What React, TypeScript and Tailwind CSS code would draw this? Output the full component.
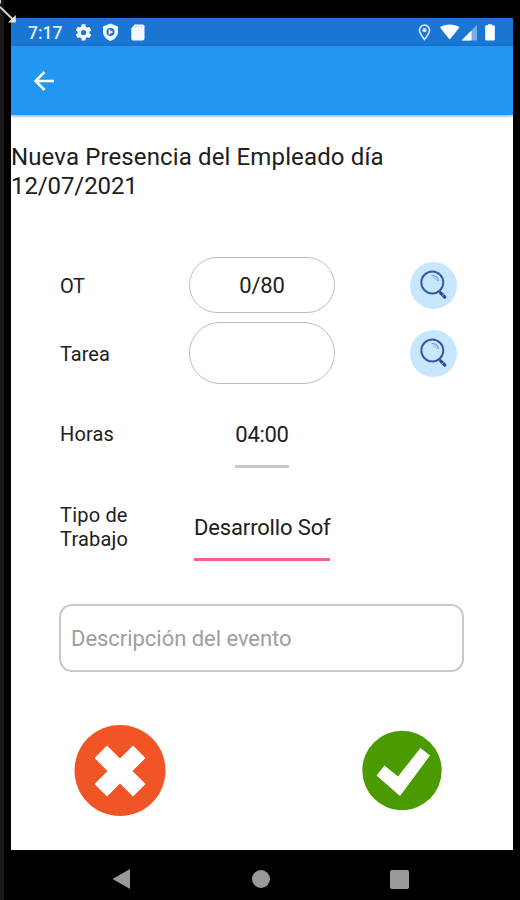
import React from "react";

function StatusIcons() {
  return (
    <svg className="ml-[12px] h-7 w-[72px] shrink-0" viewBox="0 0 72 28" fill="#f4f8ff">
      <g transform="translate(-1.3 4.700) scale(0.82)">
        <path d="M19.14 12.94c.04-.3.06-.61.06-.94s-.02-.64-.07-.94l2.03-1.58a.49.49 0 0 0 .12-.61l-1.92-3.32a.49.49 0 0 0-.59-.22l-2.39.96a7 7 0 0 0-1.62-.94l-.36-2.54A.48.48 0 0 0 13.92 2h-3.84a.47.47 0 0 0-.47.41l-.36 2.54c-.59.24-1.13.57-1.62.94l-2.39-.96a.47.47 0 0 0-.59.22L2.74 8.87a.48.48 0 0 0 .12.61l2.03 1.58a6 6 0 0 0 0 1.88l-2.03 1.58a.49.49 0 0 0-.12.61l1.92 3.32c.12.22.37.29.59.22l2.39-.96c.5.38 1.03.7 1.62.94l.36 2.54c.05.24.24.41.48.41h3.84c.24 0 .44-.17.47-.41l.36-2.54c.59-.24 1.13-.56 1.62-.94l2.39.96c.22.08.47 0 .59-.22l1.92-3.32a.47.47 0 0 0-.12-.61zM12 15.2a3.2 3.2 0 1 1 0-6.4 3.2 3.2 0 0 1 0 6.4z" />
      </g>
      <path
        fillRule="evenodd"
        d="M35.500 5.500l7.500 3v5.300c0 4.200-3 7.700-7.500 9.200-4.500-1.500-7.500-5-7.500-9.200V8.500zM35.500 10a4 4 0 1 0 0 8 4 4 0 0 0 0-8z"
      />
      <path d="M33.600 11.200l4.600 2.800-4.600 2.800z" />
      <path d="M59.500 6.500h8.300a1.700 1.700 0 0 1 1.700 1.700v12.600a1.700 1.700 0 0 1-1.700 1.700H58a1.700 1.700 0 0 1-1.700-1.700V10.500z" />
      <path d="M61 8v1.500M63.700 8v1.500M66.400 8v1.500" stroke="#a9cbf1" strokeWidth="1" />
    </svg>
  );
}

function SignalIcons() {
  return (
    <svg className="mr-[18px] h-7 w-[80px] shrink-0" viewBox="0 0 80 28" fill="white">
      <path
        d="M9.500 7.200a5 5 0 0 1 5 5c0 3-5 9.300-5 9.300s-5-6.300-5-9.300a5 5 0 0 1 5-5z"
        fill="none"
        stroke="#d5e5fa"
        strokeWidth="1.700"
      />
      <circle cx="9.500" cy="12.200" r="2.100" fill="#d5e5fa" />
      <path d="M25 9C30.500 5.500 39 5.500 44.500 9Q44 10.500 34.700 21.500Q25.500 10.500 25 9z" />
      <path d="M62 7v15.500H46.500z" fill="#78aee8" />
      <path d="M56.500 12.500v10h-10z" />
      <path d="M71.300 7.300H73V6.300h4v1h1.500a1.500 1.500 0 0 1 1.300 1.500v12.700a1 1 0 0 1-1 1h-7.600a1 1 0 0 1-1-1V8.800a1.500 1.500 0 0 1 1.100-1.500z" />
    </svg>
  );
}

function SearchButton() {
  return (
    <button className="h-[47px] w-[47px] rounded-full bg-[#c6e7fe]" aria-label="Buscar">
      <svg className="h-[47px] w-[47px]" viewBox="0 0 47 47" fill="none">
        <circle cx="22.300" cy="20.500" r="11" stroke="#3559a0" strokeWidth="1.900" />
        <path d="M21.500 13.700c4-.3 6.500 2 7 5.500" stroke="#6d98cb" strokeWidth="1.100" />
        <path d="M23 16c1.800.1 3 .9 3.700 2.400" stroke="#8ab3dc" strokeWidth="1" />
        <path d="M29 28.800l2.200 2.200" stroke="#3559a0" strokeWidth="1.900" />
        <path d="M30.800 31.200l4 4" stroke="#2a489c" strokeWidth="3.200" strokeLinecap="round" />
        <path d="M31.700 34.500l2.500-2.500" stroke="#8fb2e2" strokeWidth=".9" />
      </svg>
    </button>
  );
}

export default function App() {
  return (
    <div className="relative flex h-[900px] w-[520px] overflow-hidden bg-black font-[Roboto,sans-serif] text-[#202020]">
      <div className="w-1 shrink-0 bg-[#191919]" />

      <div className="flex flex-col pt-[18px]">
        <div className="ml-[7px] flex h-[832px] w-[502px] flex-col bg-white">
          <div className="flex h-7 items-center justify-between bg-[#1976d2]">
            <div className="flex items-center pl-[17px]">
              <span className="mt-px w-[35px] text-[17.500px] leading-7 font-medium whitespace-nowrap text-[#e2edfc]">7:17</span>
              <StatusIcons />
            </div>
            <SignalIcons />
          </div>

          <header className="flex h-[69px] items-center bg-[#2196f3] pl-[22px] shadow-[0_1px_3px_rgba(0,0,0,0.4)]">
            <svg className="h-[22px] w-[22px]" viewBox="0 0 22 22" fill="none" stroke="white" strokeWidth="2.500">
              <path d="M21 11H2.800M11.500 2L2.500 11l9 9" />
            </svg>
          </header>

          <h1 className="mt-[28px] h-[58px] text-[24px] leading-[29px] font-normal">
            <span className="tracking-[0.130px]">Nueva Presencia del Empleado día</span>
            <br />
            <span className="tracking-[-0.100px]">12/07/2021</span>
          </h1>

          <div className="mt-[56px] ml-[49px] grid w-[404px] grid-cols-[129px_146px_1fr] items-center text-[20px]">
            <span className="h-[56px] leading-[58px] tracking-[-0.500px]">OT</span>
            <div className="h-[56px] rounded-full border-[1.500px] border-[#bdbdbd] text-center text-[22px] leading-[55px] tracking-[-0.200px]">0/80</div>
            <div className="flex h-[56px] items-center justify-end pr-[7px]">
              <SearchButton />
            </div>
          </div>

          <div className="mt-[9px] ml-[49px] grid h-[63px] w-[404px] grid-cols-[129px_146px_1fr] items-start text-[20px]">
            <span className="pt-px leading-[62px]">Tarea</span>
            <div className="h-[62px] rounded-full border-[1.500px] border-[#bdbdbd]" />
            <div className="flex h-[63px] items-center justify-end pr-[7px]">
              <SearchButton />
            </div>
          </div>

          <div className="mt-[32px] ml-[49px] grid h-[51px] w-[404px] grid-cols-[129px_146px_1fr] text-[20px]">
            <span className="leading-[34px] tracking-[0.150px]">Horas</span>
            <div className="flex h-[51px] w-[54px] flex-col justify-self-center border-b-[3px] border-[#c8c8c8] text-center text-[22px] leading-[35px] tracking-[-0.300px]">
              04:00
            </div>
          </div>

          <div className="mt-[35px] ml-[49px] grid h-[59px] w-[404px] grid-cols-[134px_136px_1fr] text-[20px]">
            <span className="leading-6 tracking-[0.200px]">
              Tipo de
              <br />
              Trabajo
            </span>
            <div className="h-[58px] border-b-[3px] border-[#f06292] pt-[7px] text-[22px] leading-[35px] tracking-[-0.150px] whitespace-nowrap">
              Desarrollo Sof
            </div>
          </div>

          <div className="mt-[42px] ml-[48px] h-[68px] w-[405px] rounded-[13px] border-2 border-[#c8c8c8] pl-[10px] text-[22px] leading-[65px] tracking-[-0.040px] text-[#9e9e9e]">
            Descripción del evento
          </div>

          <div className="mt-[52px] flex items-center justify-between pr-[71px] pl-[63px]">
            <svg className="h-[92px] w-[92px]" viewBox="0 0 92 92">
              <circle cx="46" cy="46.500" r="45.500" fill="#f15525" />
              <path d="M33 21.500L46 34.500L59 21.500L71.500 34L58.500 47L71.500 60L59 72.500L46 59.500L33 72.500L20.500 60L33.500 47L20.500 34z" fill="white" />
            </svg>
            <svg className="h-[80px] w-[80px]" viewBox="0 0 80 80">
              <circle cx="40" cy="40.500" r="39.700" fill="#4b9b00" />
              <path d="M14.500 45.500L22.500 35.500L36 46.500L58.500 18L68 25.500L38 66z" fill="white" />
            </svg>
          </div>
        </div>

        <nav className="ml-[107px] flex h-[50px] w-[298px] items-center justify-between pt-[8px]">
          <svg className="h-5 w-5" viewBox="0 0 20 20" fill="#999999">
            <path d="M1.500 10L19 0v20z" />
          </svg>
          <div className="h-[18px] w-[18px] rounded-full bg-[#999999]" />
          <div className="h-[19px] w-[19px] rounded-[2px] bg-[#999999]" />
        </nav>
      </div>

      <svg className="absolute top-0 left-0 h-6 w-5" viewBox="0 0 20 24" fill="none">
        <path d="M0 7L12.500 19M0 0v3.500" stroke="#d8d8d8" strokeWidth="1.900" />
        <path d="M15.800 15v7.500H8z" fill="#e4e4e4" />
      </svg>
    </div>
  );
}
